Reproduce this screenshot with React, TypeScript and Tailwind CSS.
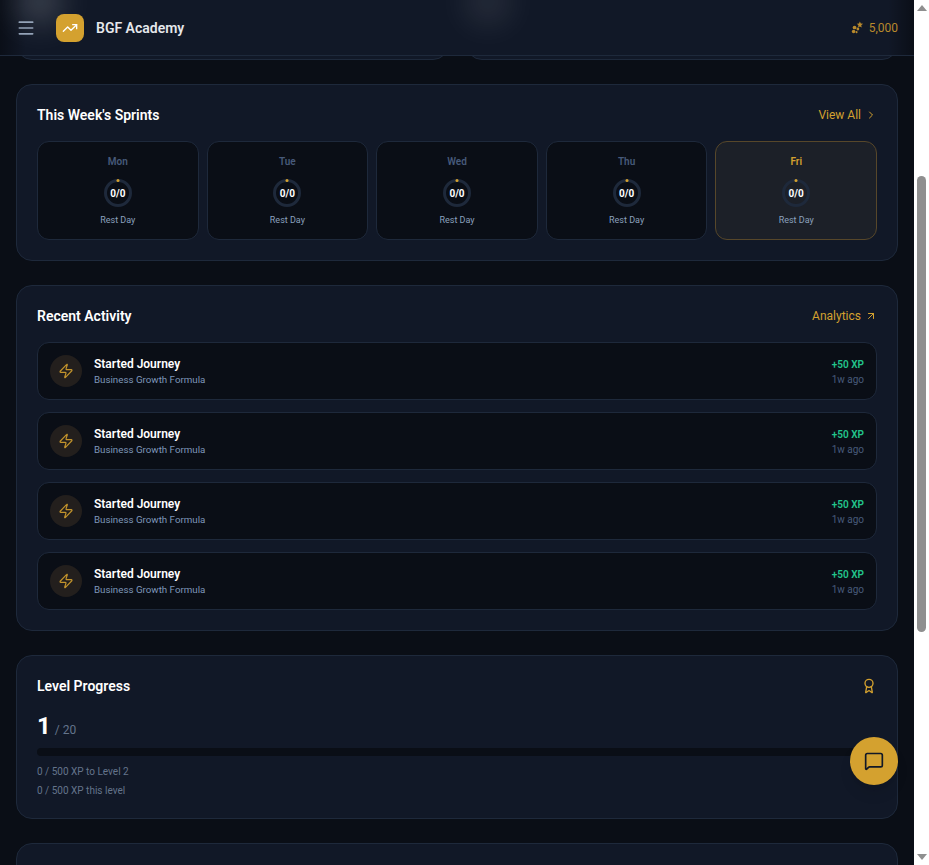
import { ArrowUpRight, Award, ChevronRight, Menu, MessageSquare, TrendingUp, Zap } from "lucide-react";

const days = ["Mon", "Tue", "Wed", "Thu", "Fri"];
const activity = [1, 2, 3, 4];

function SprintRing() {
  return (
    <div className="relative flex h-7 w-7 items-center justify-center">
      <svg viewBox="0 0 28 28" className="absolute inset-0 h-7 w-7">
        <circle cx="14" cy="14" r="12.5" fill="none" stroke="#1e293b" strokeWidth="3" />
        <circle cx="14" cy="1.5" r="1.5" fill="#d4a12f" />
      </svg>
      <span className="relative text-[10px] font-bold text-white">0/0</span>
    </div>
  );
}

function SprintDay({ name, today }: { name: string; today: boolean }) {
  return (
    <div
      className={`flex h-[99px] flex-col items-center rounded-xl border pt-[12px] ${
        today ? "border-[#57472a] bg-[#1c2028]" : "border-[#1e293b] bg-[#0a0e16]"
      }`}
    >
      <span className={`text-[10px] font-semibold leading-[15px] ${today ? "text-[#d4a12f]" : "text-[#475a7a]"}`}>{name}</span>
      <div className="mt-[10px]">
        <SprintRing />
      </div>
      <span className="mt-[7px] text-[9px] leading-[13px] text-[#8ba0bd]">Rest Day</span>
    </div>
  );
}

function ActivityRow() {
  return (
    <div className="flex h-[58px] items-center rounded-xl border border-[#1e293b] bg-[#0a0e16] px-3">
      <div className="flex h-8 w-8 items-center justify-center rounded-full bg-[#231f1d]">
        <Zap className="h-4 w-4 text-[#c2932c]" strokeWidth={1.75} />
      </div>
      <div className="ml-3 flex-1">
        <div className="text-xs font-semibold leading-4 text-white">Started Journey</div>
        <div className="text-[9.75px] leading-[15px] text-[#7f97ba]">Business Growth Formula</div>
      </div>
      <div className="pt-[2px] text-right">
        <div className="text-[10px] font-semibold leading-4 text-[#22c58b]">+50 XP</div>
        <div className="text-[10px] leading-[14px] text-[#475a7a]">1w ago</div>
      </div>
    </div>
  );
}

function Card({ children, className }: { children?: React.ReactNode; className?: string }) {
  return <section className={`rounded-2xl border border-[#1e293b] bg-[#111827] ${className ?? ""}`}>{children}</section>;
}

export default function App() {
  return (
    <div className="flex h-screen overflow-hidden bg-white text-white" style={{ fontFamily: 'Roboto, "Noto Sans", sans-serif' }}>
      <div className="relative h-full min-w-0 flex-1 overflow-hidden bg-[#0a0e16]">
        {/* Header */}
        <header className="absolute left-0 right-0 top-0 z-20 flex h-[56px] items-center overflow-hidden border-b border-[#1e293b] bg-[#111827] px-4">
          {/* soft shapes of the cards scrolled underneath */}
          <div className="absolute left-0 top-0 h-full w-[26px] bg-gradient-to-r from-black/40 to-transparent" />
          <div className="absolute right-0 top-0 h-full w-[26px] bg-gradient-to-l from-black/40 to-transparent" />
          <div className="absolute left-[18px] top-[-20px] h-[44px] w-[44px] rounded-full bg-white/20 blur-lg" />
          <div className="absolute left-[466px] top-[-20px] h-[44px] w-[44px] rounded-full bg-white/10 blur-lg" />

          <Menu className="relative h-5 w-5 text-[#94a3b8]" strokeWidth={2} />
          <div className="relative ml-[20px] flex h-7 w-7 items-center justify-center rounded-lg bg-[#d4a12f]">
            <TrendingUp className="h-4 w-4 text-white" strokeWidth={2} />
          </div>
          <span className="relative ml-3 text-sm font-semibold text-[#e5e7eb]">BGF Academy</span>
          <div className="relative ml-auto flex items-center gap-[5px] text-xs text-[#b8892c]">
            <svg viewBox="0 0 14 14" className="h-[13px] w-[13px] fill-current">
              <path d="M9.5 0.5 10.6 2.6 13 3 11 4.6 11.6 7 9.5 5.8 7.6 7 8 4.6 6.2 3 8.6 2.6Z" />
              <circle cx="3.8" cy="7" r="2" />
              <circle cx="7.4" cy="8.6" r="1.5" />
              <circle cx="2.8" cy="11.4" r="1.9" />
              <circle cx="6" cy="12" r="1.1" />
            </svg>
            5,000
          </div>
        </header>

        <main className="flex flex-col gap-6 px-4">
          {/* Cards scrolled behind the header */}
          <div className="grid h-[60px] grid-cols-2 gap-[17px]">
            <Card />
            <Card />
          </div>

          <Card className="h-[177px] px-5 pt-5">
            <div className="flex items-center justify-between">
              <h2 className="text-sm font-semibold leading-5">This Week's Sprints</h2>
              <button className="flex items-center gap-1 text-xs text-[#d4a12f]">
                View All <ChevronRight className="h-3 w-3" />
              </button>
            </div>
            <div className="mt-4 grid grid-cols-5 gap-2">
              {days.map((d) => (
                <SprintDay key={d} name={d} today={d === "Fri"} />
              ))}
            </div>
          </Card>

          <Card className="h-[346px] px-5 pt-5">
            <div className="flex items-center justify-between">
              <h2 className="text-sm font-semibold leading-5">Recent Activity</h2>
              <button className="flex items-center gap-1 text-xs text-[#d4a12f]">
                Analytics <ArrowUpRight className="h-3 w-3" />
              </button>
            </div>
            <div className="mt-4 flex flex-col gap-3">
              {activity.map((a) => (
                <ActivityRow key={a} />
              ))}
            </div>
          </Card>

          <Card className="h-[164px] px-5 pt-5">
            <div className="flex items-center justify-between">
              <h2 className="text-sm font-semibold leading-5">Level Progress</h2>
              <Award className="h-4 w-4 text-[#d4a12f]" strokeWidth={2} />
            </div>
            <div className="mt-[14px] flex items-baseline gap-1">
              <span className="text-2xl font-bold leading-8">1</span>
              <span className="text-xs text-[#64748b]">/ 20</span>
            </div>
            <div className="mt-[6px] h-2 rounded-full bg-[#0a0e16]" />
            <p className="mt-[9px] text-[10px] leading-[14px] text-[#64748b]">0 / 500 XP to Level 2</p>
            <p className="mt-[5px] text-[10px] leading-[14px] text-[#64748b]">0 / 500 XP this level</p>
          </Card>

          <Card className="h-[200px]" />
        </main>

        {/* Chat button */}
        <button className="absolute left-[850px] top-[737px] z-10 flex h-12 w-12 items-center justify-center rounded-full bg-[#d4a12f] shadow-lg">
          <MessageSquare className="h-5 w-5 text-[#111827]" />
        </button>
      </div>

      {/* Scrollbar */}
      <aside className="flex w-[15px] flex-col items-center bg-white">
        <div className="mt-[5px] h-0 w-0 border-x-[5px] border-b-[6px] border-x-transparent border-b-[#8f8f8f]" />
        <div className="mt-[165px] h-[456px] w-[9px] rounded-full bg-[#8f8f8f]" />
        <div className="mb-[5px] mt-auto h-0 w-0 border-x-[5px] border-t-[6px] border-x-transparent border-t-[#8f8f8f]" />
      </aside>
    </div>
  );
}
